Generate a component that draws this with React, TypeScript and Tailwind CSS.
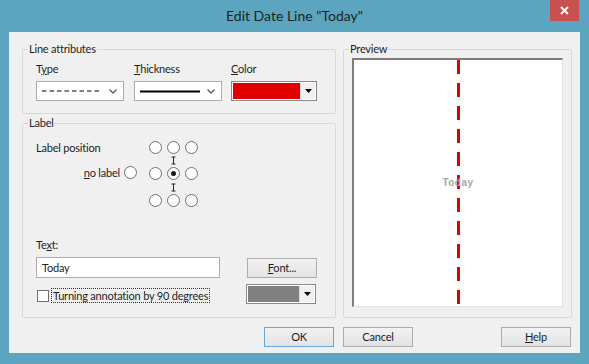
import React from 'react';

function Radio({ checked = false }: { checked?: boolean }) {
  return (
    <div className="w-[13px] h-[13px] rounded-full border border-[#707070] bg-white flex items-center justify-center shrink-0">
      {checked && <div className="w-[5px] h-[5px] rounded-full bg-[#1a1a1a]" />}
    </div>
  );
}

function Connector() {
  return (
    <svg width="13" height="13" viewBox="0 0 13 13" className="block">
      <path d="M4.5 3h4M6.5 3v7M4.5 10h4" stroke="#222" strokeWidth="1" fill="none" />
    </svg>
  );
}

function Chevron() {
  return (
    <svg width="8" height="5" viewBox="0 0 8 5" className="block">
      <path d="M0.5 0.5L4 4L7.5 0.5" stroke="#5a5a5a" strokeWidth="1.3" fill="none" />
    </svg>
  );
}

function ComboBox({ children }: { children: React.ReactNode }) {
  return (
    <div className="h-[20px] bg-white border border-[#abadb3] flex items-center pl-[5px] pr-[6px]">
      <div className="flex-1 flex items-center">{children}</div>
      <Chevron />
    </div>
  );
}

function ColorBox({ color }: { color: string }) {
  return (
    <div className="h-[20px] border border-[#8a8a8a] bg-white p-[1px] flex">
      <div className="flex-1" style={{ backgroundColor: color }} />
      <div className="w-[15px] bg-[#f0f0f0] border-l border-[#dcdcdc] flex items-center justify-center">
        <svg width="7" height="4" viewBox="0 0 7 4" className="block">
          <path d="M0 0h7L3.5 4z" fill="#000" />
        </svg>
      </div>
    </div>
  );
}

function Button({ children, focused = false, className = '' }: { children: React.ReactNode; focused?: boolean; className?: string }) {
  return (
    <div
      className={`h-[20px] w-[70px] flex items-center justify-center border bg-gradient-to-b from-[#f2f2f2] to-[#e3e3e3] ${
        focused ? 'border-[#6aa6de]' : 'border-[#acacac]'
      } ${className}`}
    >
      {children}
    </div>
  );
}

function Group({ title, className = '', children }: { title: string; className?: string; children: React.ReactNode }) {
  return (
    <fieldset className={`border border-[#d8d8d8] rounded-[2px] ${className}`}>
      <legend className="ml-[5px] px-[1px] leading-[14px]">{title}</legend>
      {children}
    </fieldset>
  );
}

export default function App() {
  return (
    <div className="w-[589px] h-[364px] bg-[#5ba5c0] flex flex-col overflow-hidden font-['Lato',sans-serif] text-[11px] tracking-[-0.2px] text-[#1e1e1e]">
      {/* title bar */}
      <div className="h-[32px] flex shrink-0">
        <div className="w-[39px]" />
        <div className="flex-1 text-center text-[14px] tracking-normal leading-[31px] text-[#1f1f1f]">Edit Date Line "Today"</div>
        <div className="w-[29px] h-[21px] mr-[10px] bg-[#c75050] flex items-center justify-center">
          <svg width="9" height="9" viewBox="0 0 9 9" className="block">
            <path d="M1 1l7 7M8 1L1 8" stroke="#fff" strokeWidth="2" />
          </svg>
        </div>
      </div>

      {/* client area */}
      <div className="mx-[9px] h-[321px] bg-[#f0f0f0] pl-[13px] pt-[10px] leading-[14px]">
        <div className="flex gap-[7px]">
          <div className="w-[314px] flex flex-col gap-[2px]">
            <Group title="Line attributes" className="h-[72px]">
              <div className="flex pl-[13px] pt-[6px]">
                <div className="w-[88px]">
                  <div>
                    T<span className="underline">y</span>pe
                  </div>
                  <div className="mt-[5px]">
                    <ComboBox>
                      <svg width="58" height="2" viewBox="0 0 58 2" className="block">
                        <line x1="0" y1="1" x2="58" y2="1" stroke="#000" strokeWidth="1" strokeDasharray="4.5 3" />
                      </svg>
                    </ComboBox>
                  </div>
                </div>
                <div className="w-[88px] ml-[10px]">
                  <div>
                    <span className="underline">T</span>hickness
                  </div>
                  <div className="mt-[5px]">
                    <ComboBox>
                      <svg width="60" height="3" viewBox="0 0 60 3" className="block">
                        <line x1="0" y1="1.5" x2="60" y2="1.5" stroke="#000" strokeWidth="2" />
                      </svg>
                    </ComboBox>
                  </div>
                </div>
                <div className="w-[86px] ml-[9px]">
                  <div>
                    <span className="underline">C</span>olor
                  </div>
                  <div className="mt-[5px]">
                    <ColorBox color="#e00000" />
                  </div>
                </div>
              </div>
            </Group>

            <Group title="Label" className="h-[202px]">
              <div className="pl-[13px] pt-[11px]">
                <div className="flex items-start">
                  <div className="w-[113px] flex flex-col">
                    <div className="leading-[14px]">Label position</div>
                    <div className="mt-[11px] flex items-center justify-end pr-[12px] h-[13px]">
                      <span>
                        <span className="underline">n</span>o label
                      </span>
                      <div className="ml-[4px]">
                        <Radio />
                      </div>
                    </div>
                  </div>
                  <div className="flex flex-col">
                    <div className="flex gap-[5px]">
                      <Radio />
                      <Radio />
                      <Radio />
                    </div>
                    <div className="flex gap-[5px] h-[13px]">
                      <div className="w-[13px]" />
                      <Connector />
                    </div>
                    <div className="flex gap-[5px]">
                      <Radio />
                      <Radio checked />
                      <Radio />
                    </div>
                    <div className="flex gap-[5px] h-[14px] items-center">
                      <div className="w-[13px]" />
                      <Connector />
                    </div>
                    <div className="flex gap-[5px]">
                      <Radio />
                      <Radio />
                      <Radio />
                    </div>
                  </div>
                </div>

                <div className="mt-[31px]">
                  Te<span className="underline">x</span>t:
                </div>
                <div className="mt-[5px] flex items-center">
                  <div className="w-[184px] h-[21px] bg-white border border-[#abadb3] flex items-center pl-[5px]">Today</div>
                  <Button className="ml-[27px] w-[69px]">
                    <span>
                      <span className="underline">F</span>ont...
                    </span>
                  </Button>
                </div>
                <div className="mt-[6px] flex items-center h-[20px]">
                  <div className="w-[210px] flex items-center">
                    <div className="w-[12px] h-[12px] ml-[1px] bg-white border border-[#707070] mt-[3px]" />
                    <div className="ml-[2px] border border-dotted border-[#333] px-[1px] mt-[3px] leading-[13px]">
                      Turning annotation by 90 de<span className="underline">g</span>rees
                    </div>
                  </div>
                  <div className="w-[70px]">
                    <ColorBox color="#808080" />
                  </div>
                </div>
              </div>
            </Group>
          </div>

          <Group title="Preview" className="w-[229px] h-[276px]">
            <div className="px-[8px] pt-[2px]">
              <div className="h-[249px] bg-white border-l-2 border-t-2 border-[#7d7d7d] border-r border-b border-r-[#e3e3e3] border-b-[#e3e3e3] flex items-center justify-center relative">
                <svg width="3" height="247" viewBox="0 0 3 247" className="block">
                  <line x1="1.5" y1="0" x2="1.5" y2="247" stroke="#e00000" strokeWidth="3" strokeDasharray="14 9" />
                </svg>
                <span className="absolute font-['Liberation_Sans',sans-serif] font-bold text-[10px] text-[#a8a8a8] tracking-[0.5px]">Today</span>
              </div>
            </div>
          </Group>
        </div>

        <div className="mt-[9px] flex">
          <Button focused className="ml-[242px]">
            OK
          </Button>
          <Button className="ml-[9px]">Cancel</Button>
          <Button className="ml-[88px]">
            <span>
              <span className="underline">H</span>elp
            </span>
          </Button>
        </div>
      </div>
    </div>
  );
}
